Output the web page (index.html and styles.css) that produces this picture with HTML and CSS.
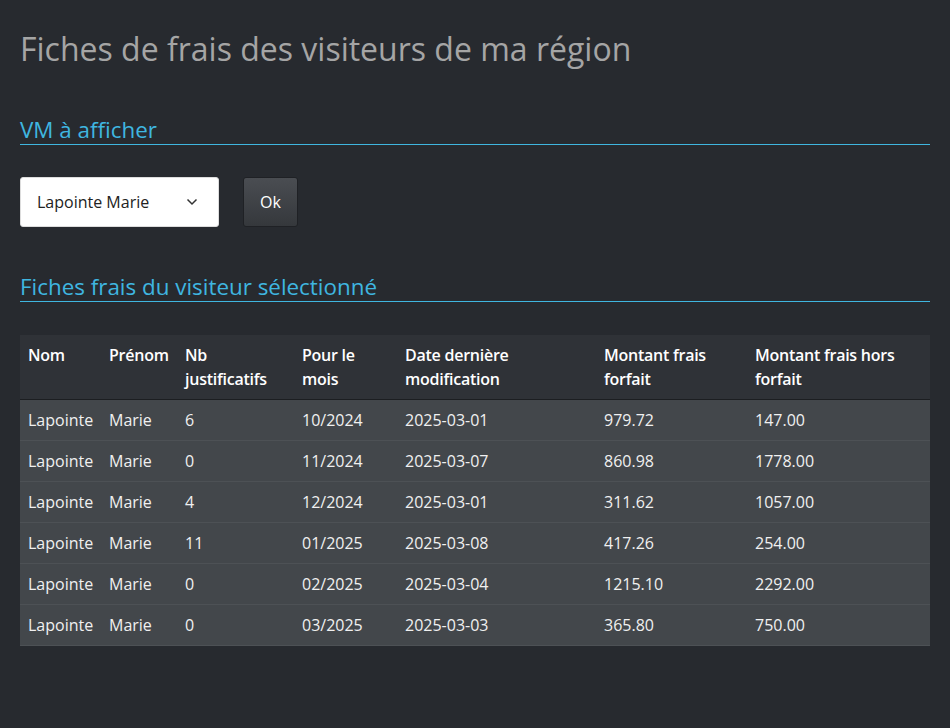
FILE: index.html
```html
<!DOCTYPE html>
<html lang="fr">
<head>
<meta charset="utf-8">
<title>Fiches de frais</title>
<link rel="stylesheet" href="styles.css">
</head>
<body>
<div class="page">
  <h1 class="title">Fiches de frais des visiteurs de ma région</h1>
  <h2 class="section">VM à afficher</h2>
  <form class="picker">
    <div class="select">
      <span>Lapointe Marie</span>
      <svg class="chev" width="12" height="8" viewBox="0 0 12 8"><path d="M1.5 1.5 L6 6 L10.5 1.5" fill="none" stroke="#333" stroke-width="1.5"/></svg>
    </div>
    <button type="button" class="btn">Ok</button>
  </form>
  <h2 class="section">Fiches frais du visiteur sélectionné</h2>
  <table class="grid">
    <thead>
      <tr>
        <th class="c1">Nom</th>
        <th class="c2">Prénom</th>
        <th class="c3">Nb justificatifs</th>
        <th class="c4">Pour le mois</th>
        <th class="c5">Date dernière modification</th>
        <th class="c6">Montant frais forfait</th>
        <th class="c7">Montant frais hors forfait</th>
      </tr>
    </thead>
    <tbody>
      <tr><td>Lapointe</td><td>Marie</td><td>6</td><td>10/2024</td><td>2025-03-01</td><td>979.72</td><td>147.00</td></tr>
      <tr><td>Lapointe</td><td>Marie</td><td>0</td><td>11/2024</td><td>2025-03-07</td><td>860.98</td><td>1778.00</td></tr>
      <tr><td>Lapointe</td><td>Marie</td><td>4</td><td>12/2024</td><td>2025-03-01</td><td>311.62</td><td>1057.00</td></tr>
      <tr><td>Lapointe</td><td>Marie</td><td>11</td><td>01/2025</td><td>2025-03-08</td><td>417.26</td><td>254.00</td></tr>
      <tr><td>Lapointe</td><td>Marie</td><td>0</td><td>02/2025</td><td>2025-03-04</td><td>1215.10</td><td>2292.00</td></tr>
      <tr><td>Lapointe</td><td>Marie</td><td>0</td><td>03/2025</td><td>2025-03-03</td><td>365.80</td><td>750.00</td></tr>
    </tbody>
  </table>
</div>
</body>
</html>
```
FILE: styles.css
```css
html, body {
  margin: 0;
  padding: 0;
  background: #272a2f;
}
body {
  font-family: "Open Sans", "DejaVu Sans", sans-serif;
  font-size: 16px;
  color: #f2f2f2;
}
.page {
  padding: 28px 20px 0 20px;
}
.title {
  margin: 0;
  font-weight: 400;
  font-size: 32px;
  line-height: 42px;
  color: #a5a5a5;
}
.section {
  margin: 46px 0 0 0;
  font-weight: 400;
  font-size: 22.4px;
  line-height: 27px;
  color: #3fb6e0;
  border-bottom: 1px solid #3fb6e0;
  padding-bottom: 1px;
}
.picker {
  display: flex;
  gap: 24px;
  margin: 32px 0 0 0;
}
.select {
  width: 199px;
  height: 50px;
  box-sizing: border-box;
  background: #fff;
  border: 1px solid #ddd;
  border-radius: 3px;
  display: flex;
  align-items: center;
  justify-content: space-between;
  padding: 0 20px 0 16px;
  color: #222;
}
.btn {
  width: 55px;
  height: 50px;
  border: 1px solid #1f2125;
  border-radius: 3px;
  background: linear-gradient(#4a4d52, #35383c);
  color: #fff;
  font-family: inherit;
  font-size: 16px;
  padding: 0;
}
.grid {
  margin-top: 33px;
  width: 100%;
  border-collapse: collapse;
  table-layout: fixed;
}
.grid th {
  background: #2f3237;
  text-align: left;
  vertical-align: top;
  font-weight: 600;
  letter-spacing: -0.25px;
  line-height: 24px;
  padding: 8px 8px 8px 8px;
  border-bottom: 1px solid #1c1e21;
  color: #fff;
}
.grid td {
  background: #43474b;
  line-height: 24px;
  padding: 8px 8px 8px 8px;
  border-bottom: 1px solid #4d5155;
  color: #f0f0f0;
}
.c1 { width: 65px; }
.c2 { width: 60px; }
.c3 { width: 101px; }
.c4 { width: 87px; }
.c5 { width: 183px; }
.c6 { width: 135px; }
```
